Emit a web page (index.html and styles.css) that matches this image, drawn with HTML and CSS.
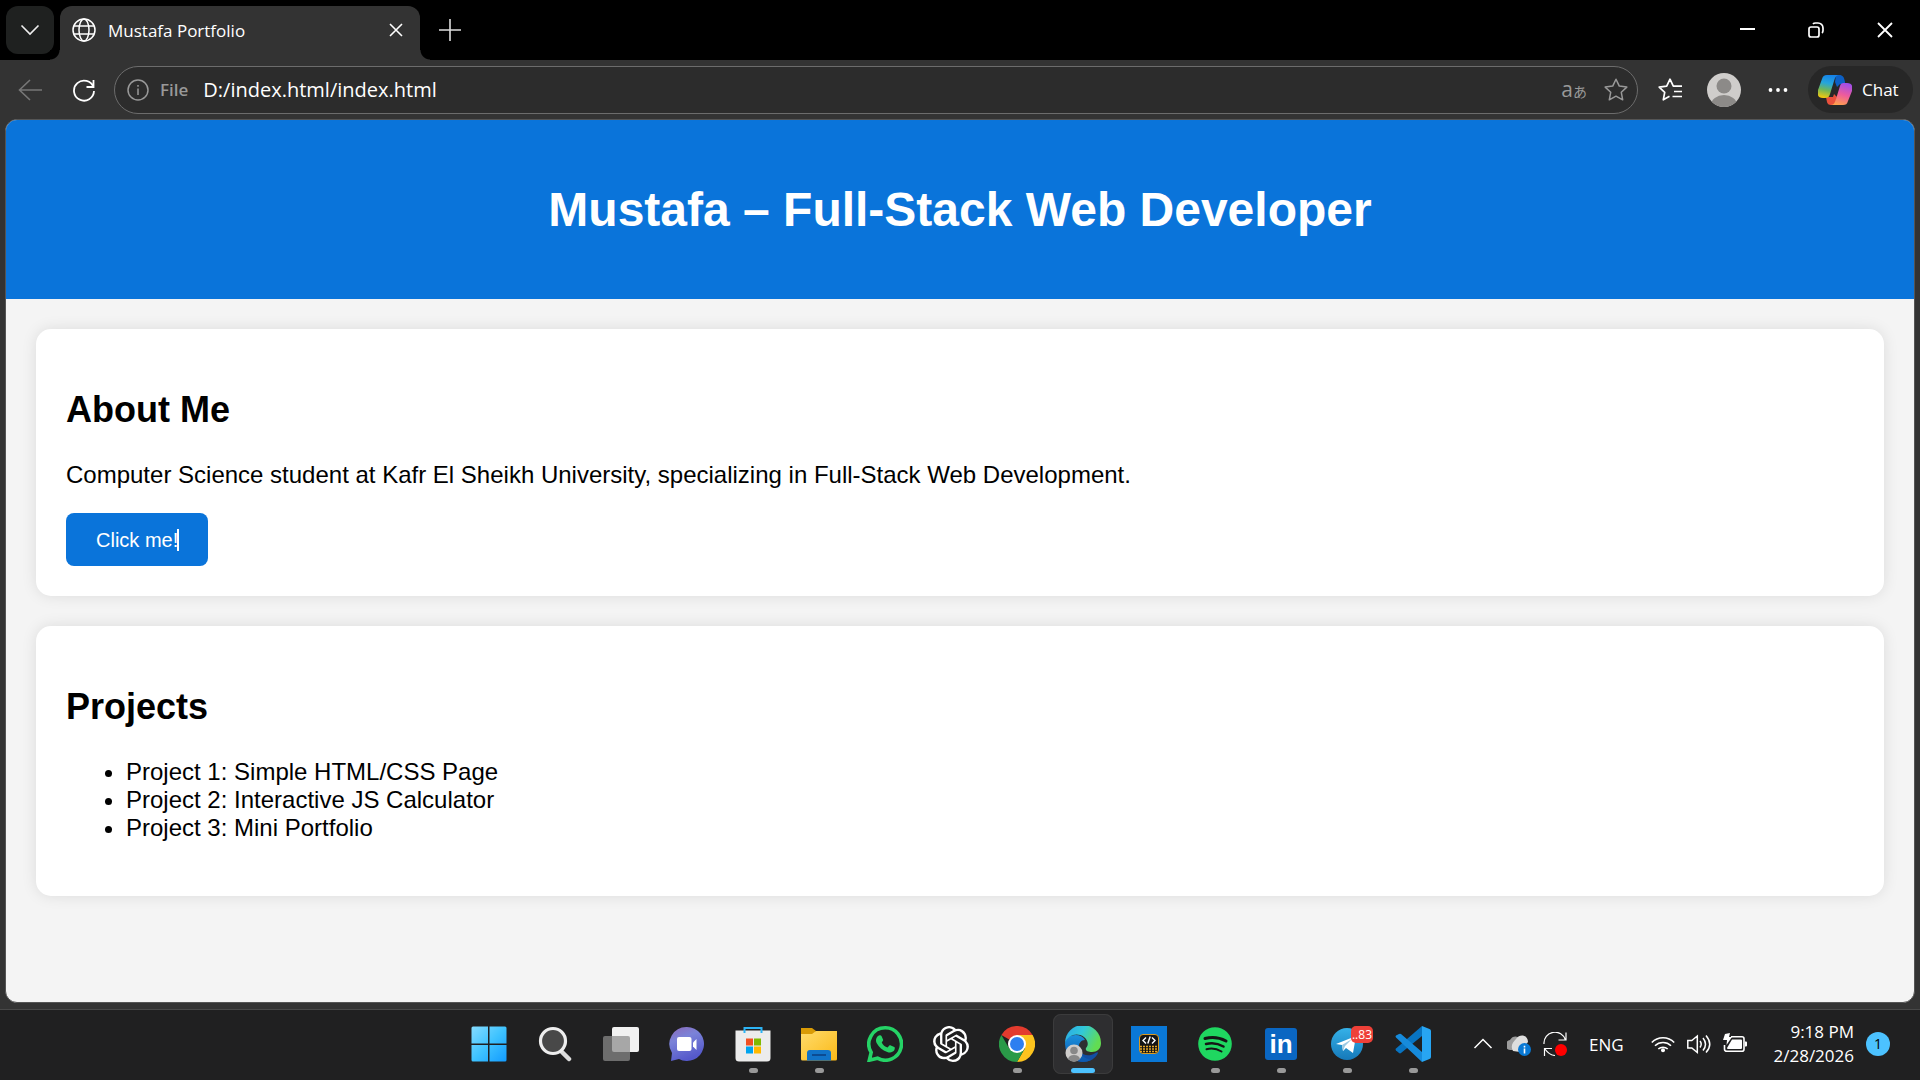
FILE: index.html
```html
<!DOCTYPE html>
<html lang="en">
<head>
<meta charset="utf-8">
<title>Mustafa Portfolio</title>
<link rel="stylesheet" href="styles.css">
</head>
<body class="desktop">
<div class="tabstrip">
  <button class="tab-menu" aria-label="Tab actions"><svg width="20" height="12" viewBox="0 0 20 12" fill="none" stroke="#eee" stroke-width="1.6"><path d="M1.500 1.500 10 10 18.500 1.500"/></svg></button>
  <div class="tab">
    <svg width="24" height="24" viewBox="0 0 24 24" fill="none" stroke="#fff" stroke-width="1.5"><circle cx="12" cy="12" r="11"/><ellipse cx="12" cy="12" rx="5" ry="11"/><path d="M2 8h20M2 16h20"/></svg>
    <span class="tab-title">Mustafa Portfolio</span>
    <button class="icon-button" aria-label="Close tab"><svg width="14" height="14" viewBox="0 0 14 14" stroke="#fff" stroke-width="1.6"><path d="M1 1 13 13M13 1 1 13"/></svg></button>
  </div>
  <button class="icon-button new-tab" aria-label="New tab"><svg width="22" height="22" viewBox="0 0 22 22" stroke="#ddd" stroke-width="1.6"><path d="M11 0v22M0 11h22"/></svg></button>
  <div class="window-controls">
    <button class="icon-button" aria-label="Minimize"><svg width="15" height="16" viewBox="0 0 15 16" stroke="#fff" stroke-width="2"><path d="M0 7h15"/></svg></button>
    <button class="icon-button" aria-label="Restore"><svg width="16" height="16" viewBox="0 0 16 16" fill="none" stroke="#fff" stroke-width="1.700"><rect x="1" y="5" width="10" height="10" rx="2"/><path d="M5 2c.6-.8 1.400-1 2.500-1H10a5 5 0 0 1 5 5v2.500c0 1-.3 1.900-1 2.500"/></svg></button>
    <button class="icon-button" aria-label="Close"><svg width="16" height="16" viewBox="0 0 16 16" stroke="#fff" stroke-width="1.8"><path d="M1 1 15 15M15 1 1 15"/></svg></button>
  </div>
</div>
<div class="toolbar">
  <button class="icon-button" aria-label="Back"><svg width="24" height="22" viewBox="0 0 24 22" fill="none" stroke="#777" stroke-width="1.6"><path d="M24 11H1M12 1 1.500 11 12 21"/></svg></button>
  <button class="icon-button reload" aria-label="Refresh"><svg width="24" height="24" viewBox="0 0 24 24" fill="none" stroke="#fff" stroke-width="1.8"><path d="M21.500 9.500A10 10 0 1 0 22 13M21.500 2v7h-7"/></svg></button>
  <label class="address">
    <svg width="22" height="22" viewBox="0 0 22 22" fill="none" stroke="#999" stroke-width="1.5"><circle cx="11" cy="11" r="10"/><path d="M11 9.500V16M11 6v1.800"/></svg>
    <span class="scheme">File</span>
    <input class="url" type="text" value="D:/index.html/index.html" aria-label="Address">
    <span class="translate">a<span class="translate-kana">あ</span></span>
    <svg width="24" height="24" viewBox="0 0 24 24" fill="none" stroke="#999" stroke-width="1.5" stroke-linejoin="round"><path d="m12 1.200 3.300 6.900 7.500 1-5.500 5.200 1.400 7.500L12 18.200l-6.700 3.600 1.400-7.500L1.200 9.100l7.500-1Z"/></svg>
  </label>
  <button class="icon-button favorites" aria-label="Favorites"><svg width="24" height="24" viewBox="0 0 24 24" fill="none" stroke="#fff" stroke-width="1.7" stroke-linejoin="round"><path d="M11.500 18.300 5.300 21.800l1.400-7.500L1.200 9.100l7.500-1L12 1.200l3.300 6.900H24M16 13.500h8M14.500 18.500H24"/></svg></button>
  <button class="icon-button" aria-label="Profile"><svg width="34" height="34" viewBox="0 0 34 34"><defs><clipPath id="face"><circle cx="17" cy="17" r="17"/></clipPath></defs><g clip-path="url(#face)"><path fill="#cfcdcb" d="M0 0h34v34H0z"/><circle cx="17" cy="13" r="7.500" fill="#8c8a88"/><ellipse cx="17" cy="32" rx="13" ry="10" fill="#8c8a88"/></g></svg></button>
  <button class="icon-button more" aria-label="More"><svg width="20" height="6" viewBox="0 0 20 6" fill="#fff"><circle cx="2.500" cy="3" r="1.900"/><circle cx="10" cy="3" r="1.900"/><circle cx="17.500" cy="3" r="1.900"/></svg></button>
  <button class="chat"><svg width="34" height="32" viewBox="0 0 34 32"><defs><linearGradient id="cp1" x1=".5" x2=".3" y2="1"><stop offset="0" stop-color="#1683e8"/><stop offset=".35" stop-color="#25a5dc"/><stop offset=".65" stop-color="#6fb65a"/><stop offset="1" stop-color="#f4c90e"/></linearGradient><linearGradient id="cp2" x1=".6" x2=".3" y2="1"><stop offset="0" stop-color="#a24ee8"/><stop offset=".5" stop-color="#ee5b9c"/><stop offset="1" stop-color="#ffa24b"/></linearGradient></defs><path fill="#0c5fc4" d="M18 1h3c4 0 5 2 6 7v2h-5l-3 3-2-5Z"/><path fill="#e9503c" d="M16 31h-3c-4 0-4-3-5-8h7l1-3 3 3-1 6Z"/><path id="ribbon" fill="url(#cp1)" d="M9 1h12c-3 0-4 3-5 6l-4 13c-1 3-2 4-5 4H5c-5 0-6-3-5-8L4 5c1-3 2-4 5-4Z"/><path fill="url(#cp2)" d="M25 31H13c3 0 4-3 5-6l4-13c1-3 2-3 5-3h2c5 0 6 3 5 8l-4 10c-1 3-2 4-5 4Z"/></svg>Chat</button>
</div>
<div class="viewport">
  <main class="page">
    <header class="hero"><h1 class="hero-title">Mustafa – Full-Stack Web Developer</h1></header>
    <section class="card">
      <h2 class="card-title">About Me</h2>
      <p class="card-text">Computer Science student at Kafr El Sheikh University, specializing in Full-Stack Web Development.</p>
      <button class="cta">Click me!<span class="caret"></span></button>
    </section>
    <section class="card">
      <h2 class="card-title">Projects</h2>
      <ul class="projects">
        <li>Project 1: Simple HTML/CSS Page</li>
        <li>Project 2: Interactive JS Calculator</li>
        <li>Project 3: Mini Portfolio</li>
      </ul>
    </section>
  </main>
</div>
<footer class="taskbar">
  <nav class="apps" aria-label="Apps">
    <button class="app" aria-label="Start"><svg width="36" height="36" viewBox="0 0 36 36"><defs><linearGradient id="win" x2="1" y2="1"><stop offset="0" stop-color="#85dcff"/><stop offset=".5" stop-color="#3fc3ff"/><stop offset="1" stop-color="#129bff"/></linearGradient></defs><path fill="url(#win)" d="M2 .5h15v17H.5V2Q.5.5 2 .5ZM18.500.5H34Q35.500.5 35.500 2v15.500h-17ZM.5 19H17v16.500H2Q.5 35.500.5 34ZM18.500 19h17v15q0 1.500-1.500 1.500H18.500Z"/></svg></button>
    <button class="app" aria-label="Search"><svg width="36" height="36" viewBox="0 0 36 36"><path d="m25 26 7 7" stroke="#ddd" stroke-width="4.500" stroke-linecap="round"/><circle cx="16" cy="15" r="12.500" fill="#484848" stroke="#eee" stroke-width="3.200"/></svg></button>
    <button class="app" aria-label="Task view"><svg width="36" height="36" viewBox="0 0 36 36"><rect x="9" y="1" width="27" height="25" rx="2" fill="#f1f1f1"/><rect y="10" width="27" height="25" rx="2" fill="#8a8a8a" opacity=".72"/></svg></button>
    <button class="app" aria-label="Chat"><svg width="36" height="36" viewBox="0 0 36 36"><defs><linearGradient id="mt" x2=".4" y2="1"><stop offset="0" stop-color="#8b68b8"/><stop offset=".4" stop-color="#7b83d8"/><stop offset="1" stop-color="#5559cb"/></linearGradient></defs><path fill="url(#mt)" d="M18 1a17 17 0 1 1-8 32L2 35l1-8A17 17 0 0 1 18 1Z"/><rect x="8" y="11" width="14.500" height="14" rx="2" fill="#fff"/><path fill="#fff" d="M24 16.500 27.500 13v11L24 20.500Z"/></svg></button>
    <button class="app running" aria-label="Store"><svg width="36" height="36" viewBox="0 0 36 36"><path fill="#ececec" d="M.5 4.500h35V32q0 3.500-3.500 3.500H4Q.5 35.500.5 32Z"/><path fill="none" stroke="#2cb4f5" stroke-width="2" d="M9.500 7V2h17v5"/><path fill="#f25022" d="M11 12.500h7v7h-7z"/><path fill="#7fba00" d="M19 12.500h7v7h-7z"/><path fill="#00a4ef" d="M11 20.500h7v7h-7z"/><path fill="#ffb900" d="M19 20.500h7v7h-7z"/></svg></button>
    <button class="app running" aria-label="File Explorer"><svg width="36" height="36" viewBox="0 0 36 36"><defs><linearGradient id="fold" x2="1" y2="1"><stop offset="0" stop-color="#ffdc6c"/><stop offset="1" stop-color="#fbb917"/></linearGradient></defs><path fill="#d99b06" d="M0 2h11l4 3-3 6H0Z"/><path fill="url(#fold)" d="M0 8h11l4-3h21v28q0 1.500-1.500 1.500h-33Q0 34.500 0 33Z"/><path fill="#1173c8" d="M6 34.500V27q0-3 3-3h18q3 0 3 3v7.500Z"/><path stroke="#0b3e80" stroke-width="1.500" d="M11 29h14"/></svg></button>
    <button class="app" aria-label="WhatsApp"><svg width="36" height="36" viewBox="0 0 36 36"><path fill="none" stroke="#25d366" stroke-width="3.600" d="M18 1.800A16.200 16.200 0 1 1 10.500 32.200L2.300 34.200 4.200 26.400A16.200 16.200 0 0 1 18 1.800Z"/><path fill="#25d366" d="M12 9.500c1-.3 2.200-.3 2.600.7l1.500 3.600c.3.700-.5 1.600-1.400 2.600 1.300 2.500 3.200 4.100 5.900 5.200l1.700-2c.4-.5 1-.5 1.500-.2l3.500 1.700c.9.500.5 2.400-.2 3.500-1.400 1.800-4.100 2.400-6.800 1.300-5-1.700-8.200-4.600-10.700-9-1.300-2.700-.4-6.200 2.400-7.400Z"/></svg></button>
    <button class="app" aria-label="ChatGPT"><svg width="36" height="36" viewBox="0 0 24 24"><path fill="#fff" d="M22.2819 9.8211a5.9847 5.9847 0 0 0-.5157-4.9108 6.0462 6.0462 0 0 0-6.5098-2.9A6.0651 6.0651 0 0 0 4.9807 4.1818a5.9847 5.9847 0 0 0-3.9977 2.9 6.0462 6.0462 0 0 0 .7427 7.0966 5.98 5.98 0 0 0 .511 4.9107 6.051 6.051 0 0 0 6.5146 2.9001A5.9847 5.9847 0 0 0 13.2599 24a6.0557 6.0557 0 0 0 5.7718-4.2058 5.9894 5.9894 0 0 0 3.9977-2.9001 6.0557 6.0557 0 0 0-.7475-7.0729zm-9.022 12.6081a4.4755 4.4755 0 0 1-2.8764-1.0408l.1419-.0804 4.7783-2.7582a.7948.7948 0 0 0 .3927-.6813v-6.7369l2.02 1.1686a.071.071 0 0 1 .038.052v5.5826a4.504 4.504 0 0 1-4.4945 4.4944zm-9.6607-4.1254a4.4708 4.4708 0 0 1-.5346-3.0137l.142.0852 4.783 2.7582a.7712.7712 0 0 0 .7806 0l5.8428-3.3685v2.3324a.0804.0804 0 0 1-.0332.0615L9.74 19.9502a4.4992 4.4992 0 0 1-6.1408-1.6464zM2.3408 7.8956a4.485 4.485 0 0 1 2.3655-1.9728V11.6a.7664.7664 0 0 0 .3879.6765l5.8144 3.3543-2.0201 1.1685a.0757.0757 0 0 1-.071 0l-4.8303-2.7865A4.504 4.504 0 0 1 2.3408 7.872zm16.5963 3.8558L13.1038 8.364 15.1192 7.2a.0757.0757 0 0 1 .071 0l4.8303 2.7913a4.4944 4.4944 0 0 1-.6765 8.1042v-5.6772a.79.79 0 0 0-.407-.667zm2.0107-3.0231l-.142-.0852-4.7735-2.7818a.7759.7759 0 0 0-.7854 0L9.409 9.2297V6.8974a.0662.0662 0 0 1 .0284-.0615l4.8303-2.7866a4.4992 4.4992 0 0 1 6.6802 4.66zM8.3065 12.863l-2.02-1.1638a.0804.0804 0 0 1-.038-.0567V6.0742a4.4992 4.4992 0 0 1 7.3757-3.4537l-.142.0805L8.704 5.459a.7948.7948 0 0 0-.3927.6813zm1.0976-2.3654l2.602-1.4998 2.6069 1.4998v2.9994l-2.5974 1.4997-2.6067-1.4997Z"/></svg></button>
    <button class="app running" aria-label="Chrome"><svg width="36" height="36" viewBox="0 0 36 36"><path fill="#e33b2e" d="M18 18 2.400 9A18 18 0 0 1 33.600 9Z"/><path fill="#fcc31e" d="M18 9h15.600A18 18 0 0 1 18 36l7.800-13.500Z"/><path fill="#2a9a48" d="M2.400 9 10.200 22.500 18 27l7.800-4.500L18 36A18 18 0 0 1 2.400 9Z"/><circle cx="18" cy="18" r="9" fill="#fff"/><circle cx="18" cy="18" r="7" fill="#2d7ff0"/></svg></button>
    <button class="app active" aria-label="Edge"><svg width="36" height="36" viewBox="0 0 36 36"><defs><linearGradient id="eg" x2="1" y2=".4"><stop offset="0" stop-color="#2aa7e8"/><stop offset=".5" stop-color="#32c8d8"/><stop offset="1" stop-color="#62dc52"/></linearGradient><linearGradient id="eb" x2="0" y2="1"><stop offset="0" stop-color="#1b90dc"/><stop offset="1" stop-color="#0c57ae"/></linearGradient></defs><path fill="#124fa3" d="M14 16c-3 8 4 15 12 13 4-1 7-4 7-2-2 5-8 9-15 9C8 36 4 26 8 18Z"/><path fill="url(#eb)" d="M0 18C0 8 16 6 20 14c-5 0-7 5-6 9 1 7 7 10 12 11A18 18 0 0 1 0 18Z"/><path fill="url(#eg)" d="M0 17A18 18 0 0 1 36 17c0 6-4 9-9 9-4 0-7-1-6-4 3-3 2-8-2-11C12 6 3 9 0 17Z"/><circle cx="9" cy="27" r="8.500" fill="#cfcdcb"/><circle cx="9" cy="24.500" r="3.800" fill="#888"/><path fill="#888" d="M3 33q1-4 6-4t6 4q-3 3-6 3t-6-3Z"/></svg></button>
    <button class="app" aria-label="Code editor"><svg width="36" height="36" viewBox="0 0 36 36"><path fill="#0a78d7" d="M0 0h36v36H0z"/><rect x="8.500" y="8.500" width="19" height="19" rx="3.500" fill="#151515" stroke="#d99a22"/><path fill="none" stroke="#fff" stroke-width="1.400" d="m15 11.500-3 3 3 3M21 11.500l3 3-3 3M19.200 10.500l-2.400 7"/><path stroke="#e6a625" stroke-width="1.600" stroke-dasharray="2 1" d="M9 20.500h18M9 23h18M9 25.500h18"/></svg></button>
    <button class="app running" aria-label="Spotify"><svg width="34" height="34" viewBox="0 0 34 34"><circle cx="17" cy="17" r="16.800" fill="#1fd760"/><path fill="none" stroke="#151515" stroke-linecap="round" stroke-width="3" d="M7 11.500q11-3 21 2.500"/><path fill="none" stroke="#151515" stroke-linecap="round" stroke-width="2.500" d="M8 17q9-2.500 17.500 2.500"/><path fill="none" stroke="#151515" stroke-linecap="round" stroke-width="2" d="M8.500 22.200q8-2 15 2.300"/></svg></button>
    <button class="app running" aria-label="LinkedIn"><span class="linkedin">in</span></button>
    <button class="app running" aria-label="Telegram"><svg width="34" height="34" viewBox="0 0 34 34"><defs><linearGradient id="tg" x2="0" y2="1"><stop offset="0" stop-color="#35b1e8"/><stop offset="1" stop-color="#1679b9"/></linearGradient></defs><circle cx="17" cy="17" r="16" fill="url(#tg)"/><path fill="#fff" d="m6 17 20-8-3 17-7-5-3 3-1-6Z"/><path fill="#9cc9e3" d="m12 18 10-6-7 7-2 5Z"/></svg><span class="count">..83</span></button>
    <button class="app running" aria-label="Visual Studio Code"><svg width="36" height="36" viewBox="0 0 36 36"><path fill="#0874c2" d="M1 22.500 27 0v10L6 27q-1 .8-2 0l-3-2.500q-1-1 0-2Z"/><path fill="#168bdc" d="M1 11.500Q0 10.500 1 9.500L4 8q1-.7 2 0l21 18v10Z"/><path fill="#27a5f3" d="m27 0 7.500 3Q36 3.700 36 5v26q0 1.300-1.500 2L27 36Z"/></svg></button>
  </nav>
  <div class="tray">
    <svg width="24" height="24" viewBox="0 0 24 24" fill="none" stroke="#fff" stroke-width="1.500"><path d="m3.500 16 8.500-8.500 8.500 8.500"/></svg>
    <svg width="24" height="24" viewBox="0 0 24 24"><path fill="#9c9c9c" d="M4 18a4.500 4.500 0 0 1-1-10 7 7 0 0 1 8-3l5 13Z"/><path fill="#dedede" d="M6 19c-3-5 0-9 3-12 4-6 12-4 12 3l-8 10Z"/><circle cx="17.500" cy="17.500" r="6.500" fill="#0878d4"/><path stroke="#fff" stroke-width="1.600" d="M17.500 16.500v5M17.500 13.800v1.700"/></svg>
    <svg width="24" height="24" viewBox="0 0 24 24" fill="none" stroke="#fff" stroke-width="1.200"><path d="M1 12A11 11 0 0 1 22.500 8M23 .5V8h-7.500M9 16.500H1.500V24M2 17q4 6 10 6.500"/><circle cx="18" cy="18" r="6" fill="red" stroke="none"/></svg>
    <span class="language">ENG</span>
    <svg width="24" height="24" viewBox="0 0 24 24" fill="none" stroke="#fff" stroke-width="1.600"><path d="M.8 10.500a15.500 15.500 0 0 1 22.400 0M4 13.800a11.500 11.500 0 0 1 16 0M7.300 17a7 7 0 0 1 9.400 0"/><circle cx="12" cy="18.200" r="2" fill="#fff" stroke="none"/></svg>
    <svg width="24" height="24" viewBox="0 0 24 24" fill="none" stroke="#fff" stroke-width="1.500"><path d="M.8 8.500h4L10.300 4v16.500L4.800 16h-4ZM13 9q2.400 3 0 6.500M16 6q5 6.200 0 12.500M19 3.500q7.500 9 0 17"/></svg>
    <svg width="24" height="24" viewBox="0 0 24 24"><path fill="none" stroke="#fff" stroke-width="1.600" d="M8 4.800h11q2 0 2 2v10.400q0 2-2 2H4q-2.500 0-2.500-2V13"/><path fill="#fff" d="M9 7.500h9q1 0 1 1V16q0 1-1 1H5q-1 0-1-1ZM22 9.500h1q1 0 1 1v3q0 1-1 1h-1ZM2 2l5-1-1 4h3l-5.500 8 .5-5H0Z"/></svg>
    <time class="clock" datetime="2026-02-28T21:18">9:18 PM<br>2/28/2026</time>
    <span class="badge">1</span>
  </div>
</footer>
</body>
</html>
```
FILE: styles.css
```css
* { box-sizing: border-box; }

.desktop {
  margin: 0;
  min-height: 100vh;
  display: flex;
  flex-direction: column;
  background: #333;
  color: #fff;
  font-family: "Open Sans", "Noto Sans", sans-serif;
  font-size: 17px;
}

button { border: 0; padding: 0; background: none; color: inherit; font: inherit; }
svg { display: block; flex: none; }

/* Tab strip */
.tabstrip {
  height: 60px;
  display: flex;
  align-items: center;
  padding: 0 27px 0 6px;
  background: #000;
}
.tab-menu {
  width: 48px;
  height: 48px;
  display: grid;
  place-items: center;
  border-radius: 12px;
  background: #1f2120;
}
.icon-button { display: grid; place-items: center; flex: none; }
.tab {
  position: relative;
  align-self: flex-end;
  width: 360px;
  height: 54px;
  margin-left: 6px;
  padding: 0 17px 6px 12px;
  display: flex;
  align-items: center;
  gap: 12px;
  border-radius: 12px 12px 0 0;
  background: #333;
}
.tab::before,
.tab::after {
  content: "";
  position: absolute;
  bottom: 0;
  width: 10px;
  height: 10px;
}
.tab::before { right: 100%; background: radial-gradient(circle at 0 0, #000 9px, #333 10px); }
.tab::after { left: 100%; background: radial-gradient(circle at 100% 0, #000 9px, #333 10px); }
.tab-title { flex: 1; padding-top: 2px; line-height: 24px; }
.new-tab { margin-left: 19px; }
.window-controls { margin-left: auto; display: flex; gap: 53px; }

/* Toolbar */
.toolbar {
  height: 59px;
  padding: 0 7px 0 18px;
  display: flex;
  align-items: center;
}
.reload { margin-left: 30px; }
.address {
  flex: 1;
  height: 48px;
  margin-left: 18px;
  padding: 0 9px 0 12px;
  display: flex;
  align-items: center;
  border: 1px solid #6c6c6c;
  border-radius: 24px;
  background: #2c2c2c;
}
.scheme { margin: 0 15px 0 11px; color: #999; font-weight: 600; }
.url {
  flex: 1;
  min-width: 0;
  padding: 0;
  border: 0;
  outline: 0;
  background: none;
  color: #fff;
  font-family: inherit;
  font-size: 20px;
}
.translate { margin-right: 17px; color: #999; font-size: 21px; line-height: 24px; }
.translate-kana { font-family: "Noto Sans CJK JP", sans-serif; font-size: 14px; }
.favorites { margin: 0 25px 0 20px; }
.more { margin: 0 20px 0 27px; }
.chat {
  width: 105px;
  height: 47px;
  display: flex;
  align-items: center;
  gap: 10px;
  padding-left: 10px;
  border-radius: 24px;
  background: #272727;
}

/* Web page */
.viewport {
  flex: 1;
  display: flex;
  padding: 0 5px 6px;
  border-bottom: 1px solid #484848;
}
.page {
  flex: 1;
  border: 1px solid #555;
  border-radius: 12px;
  overflow: hidden;
  background: #f4f4f4;
  color: #000;
  font-family: "Liberation Sans", Arial, sans-serif;
  font-size: 24px;
  line-height: 28px;
}
.hero { padding: 30px; background: #0a74da; color: #fff; text-align: center; }
.hero-title { margin: 32px 0; font-size: 48px; line-height: 55px; }
.card {
  margin: 30px;
  padding: 30px;
  border-radius: 15px;
  background: #fff;
  box-shadow: 0 0 15px rgba(0, 0, 0, 0.1);
}
.card-title { margin: 30px 0; font-size: 36px; line-height: 42px; }
.card-text { margin: 0 0 24px; }
.cta {
  height: 53px;
  padding: 0 30px;
  border-radius: 8px;
  background: #0a74da;
  color: #fff;
  font-size: 20px;
  display: flex;
  align-items: center;
}
.caret { width: 2px; height: 22px; margin: 0 -1px; background: #fff; }
.projects { margin: 0 0 24px; padding-left: 60px; }

/* Taskbar */
.taskbar {
  height: 70px;
  display: grid;
  grid-template-columns: 1fr auto 1fr;
  padding-right: 18px;
  background: #202021;
}
.apps { grid-column: 2; display: flex; align-items: center; }
.app {
  position: relative;
  width: 60px;
  height: 60px;
  margin: 0 3px 2px;
  display: grid;
  place-items: center;
  border-radius: 8px;
}
.running::after,
.active::after {
  content: "";
  position: absolute;
  bottom: 1px;
  left: 50%;
  width: 9px;
  height: 5px;
  margin-left: -4px;
  border-radius: 3px;
  background: #999;
}
.active { background: #2e2e30; box-shadow: inset 0 0 0 1px #3b3b3c; }
.active::after { width: 24px; margin-left: -12px; background: #4cc2ff; }
.linkedin {
  width: 32px;
  height: 32px;
  border-radius: 3px;
  background: #0a66c2;
  color: #fff;
  font: bold 26px/32px "Liberation Sans", Arial, sans-serif;
}
.count {
  position: absolute;
  top: 12px;
  right: 4px;
  padding: 0 1px;
  border-radius: 5px;
  background: #ee4038;
  color: #fff;
  font-size: 12px;
  line-height: 17px;
}
.tray {
  grid-column: 3;
  display: flex;
  align-items: center;
  justify-content: flex-end;
  gap: 12px;
  padding: 0 12px 2px 0;
}
.language { width: 60px; padding-left: 10px; }
.clock { width: 95px; text-align: right; line-height: 24px; }
.badge {
  width: 24px;
  height: 24px;
  border-radius: 50%;
  background: #4cc2ff;
  color: #000;
  font-size: 14px;
  line-height: 24px;
  text-align: center;
}
```
